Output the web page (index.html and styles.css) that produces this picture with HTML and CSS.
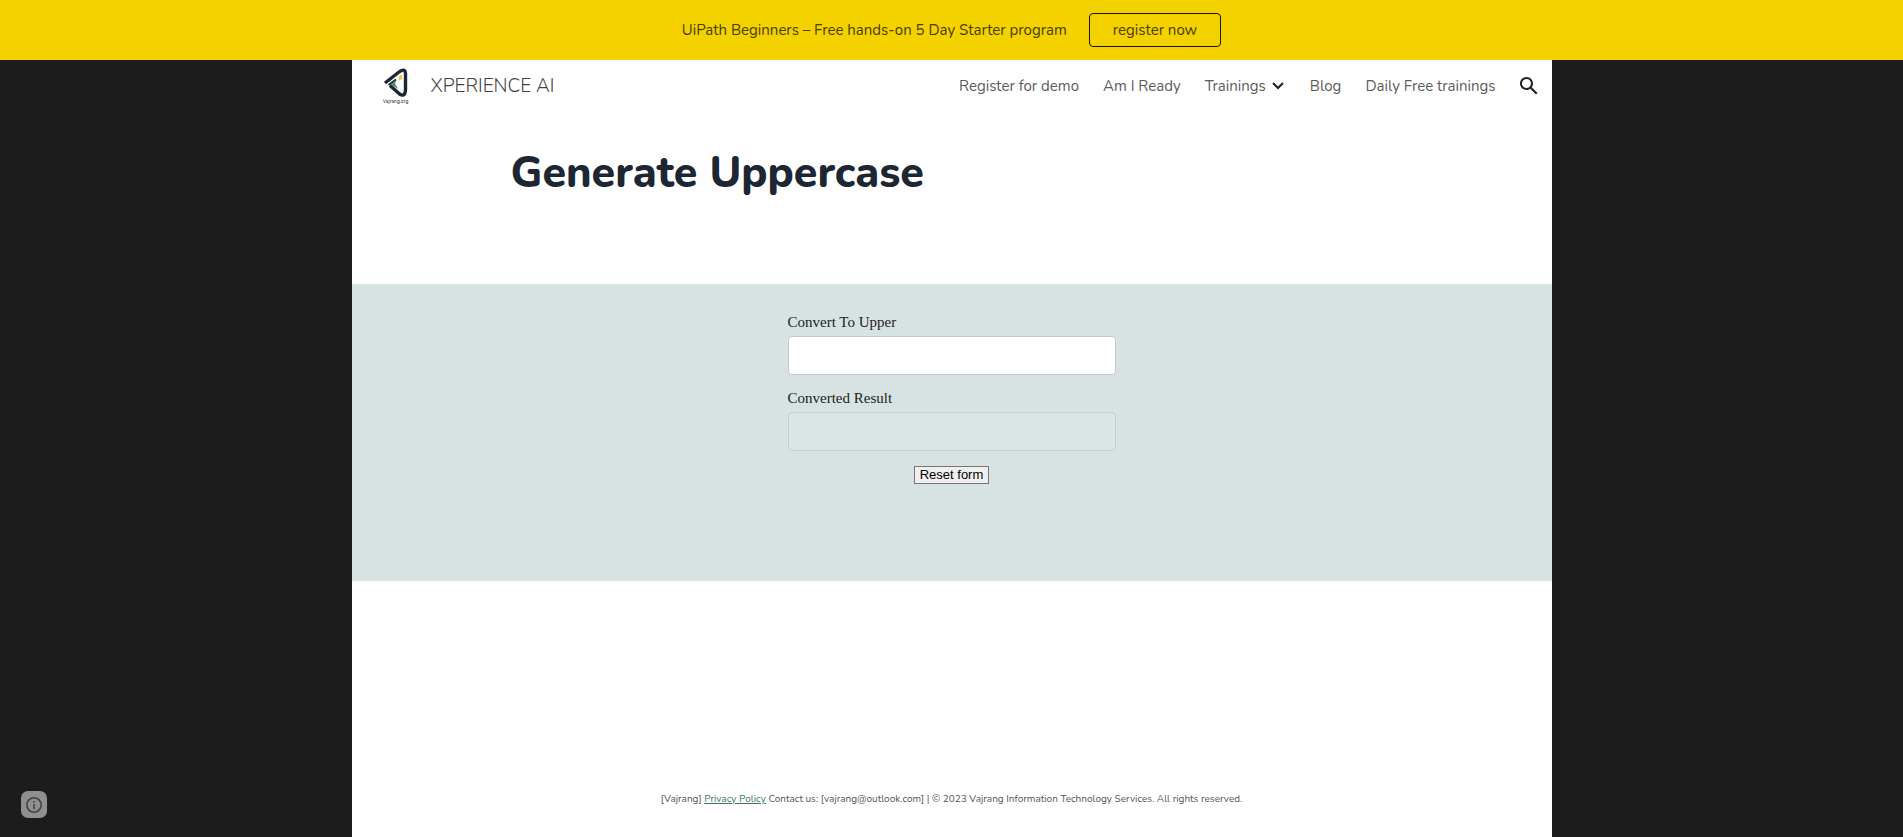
FILE: index.html
```html
<!DOCTYPE html>
<html lang="en">
<head>
<meta charset="utf-8">
<meta name="viewport" content="width=device-width, initial-scale=1">
<title>Generate Uppercase - XPERIENCE AI</title>
<link rel="stylesheet" href="styles.css">
</head>
<body>
<aside class="banner">
  <p class="banner-text">UiPath Beginners – Free hands-on 5 Day Starter program</p>
  <a class="banner-link" href="#register">register now</a>
</aside>
<div class="page">
  <header class="header">
    <a class="brand" href="#home">
      <span class="logo">
        <svg class="logo-mark" viewBox="0 0 26 30" aria-hidden="true">
          <path d="M2 15 16 4Q22-.5 22.500 5.500V22Q22 29.500 16.500 26L7 17.500" fill="none" stroke="#1c2733" stroke-width="3.400"/>
          <path d="m5.500 17 7.500-5.500" fill="none" stroke="#1c2733" stroke-width="2"/>
          <path d="m7.500 16.500 5.500-4-1 3.500 3.500 5z" fill="#4f8b78"/>
          <path d="m16 8.800 3-2.500v5l-3 1z" fill="#eac74a"/>
        </svg>
        <span class="logo-name">Vajrang.org</span>
      </span>
      <span class="brand-name">XPERIENCE AI</span>
    </a>
    <nav class="nav" aria-label="Site">
      <a class="nav-link" href="#demo">Register for demo</a>
      <a class="nav-link" href="#ready">Am I Ready</a>
      <a class="nav-link nav-more" href="#trainings">Trainings
        <svg class="chevron" viewBox="0 0 12 8" aria-hidden="true"><path d="m1 1 5 5 5-5" fill="none" stroke="#212121" stroke-width="2"/></svg>
      </a>
      <a class="nav-link" href="#blog">Blog</a>
      <a class="nav-link" href="#daily">Daily Free trainings</a>
      <button class="search" type="button" aria-label="Open search">
        <svg class="search-icon" viewBox="3 3 18 18" aria-hidden="true"><path fill="#212121" d="M20.490 19l-5.730-5.730C15.530 12.200 16 10.910 16 9.500 16 5.910 13.090 3 9.500 3S3 5.910 3 9.500 5.910 16 9.500 16c1.410 0 2.700-.47 3.770-1.240L19 20.490 20.490 19zM5 9.500C5 7.010 7.010 5 9.500 5S14 7.010 14 9.500 11.990 14 9.500 14 5 11.990 5 9.500z"/></svg>
      </button>
    </nav>
  </header>
  <main>
    <div class="title-section">
      <h1 class="title">Generate Uppercase</h1>
    </div>
    <section class="tool">
      <form class="form">
        <label class="label" for="source">Convert To Upper</label>
        <input class="field" id="source" type="text">
        <label class="label" for="result">Converted Result</label>
        <input class="field" id="result" type="text" disabled>
        <button class="reset" type="reset">Reset form</button>
      </form>
    </section>
  </main>
  <footer class="footer">
    <p class="footer-text">[Vajrang] <a class="footer-link" href="#privacy">Privacy Policy</a> Contact us: [vajrang@outlook.com] | © 2023 Vajrang Information Technology Services. All rights reserved.</p>
  </footer>
</div>
<button class="info" type="button" aria-label="Site actions">
  <svg class="info-icon" viewBox="0 0 18 18" aria-hidden="true"><circle cx="9" cy="9" r="7.200" fill="none" stroke="#424242" stroke-width="1.600"/><path d="M8.200 5h1.600v1.600H8.200zM8.200 8h1.600v5H8.200z" fill="#424242"/></svg>
</button>
</body>
</html>
```
FILE: styles.css
```css
* {
  box-sizing: border-box;
}

body {
  margin: 0;
  min-height: 100vh;
  display: flex;
  flex-direction: column;
  background: #1c1c1c;
  color: #212121;
  font-family: Nunito, "Open Sans", sans-serif;
}

.banner {
  display: flex;
  flex-wrap: wrap;
  align-items: center;
  justify-content: center;
  gap: 22px;
  min-height: 60px;
  background: #f4d200;
  color: #4a3d0a;
  font-size: 15px;
}

.banner-text {
  margin: 0;
}

.banner-link {
  padding: 0 23px;
  border: 1px solid #1c1500;
  border-radius: 4px;
  color: inherit;
  line-height: 32px;
  text-decoration: none;
}

.page {
  flex: 1;
  display: flex;
  flex-direction: column;
  width: 100%;
  max-width: 1200px;
  margin: 0 auto;
  background: #fff;
}

.header {
  display: flex;
  align-items: center;
  justify-content: space-between;
  min-height: 52px;
  padding: 0 14px 0 30px;
}

.brand {
  display: flex;
  align-items: center;
  gap: 21px;
  color: #424242;
  text-decoration: none;
}

.logo {
  display: flex;
  flex-direction: column;
  align-items: center;
  width: 28px;
}

.logo-mark {
  width: 26px;
  height: 30px;
}

.logo-name {
  font-size: 5px;
  line-height: 7px;
  color: #212121;
}

.brand-name {
  font-size: 19px;
  font-weight: 300;
}

.nav {
  display: flex;
  align-items: center;
  gap: 24px;
  font-size: 15px;
}

.nav-link {
  color: #5c5c5c;
  text-decoration: none;
}

.nav-more {
  display: flex;
  align-items: center;
  gap: 6px;
  padding-right: 2px;
}

.chevron {
  width: 12px;
  height: 8px;
}

.search {
  display: flex;
  padding: 0;
  border: 0;
  background: none;
}

.search-icon {
  width: 18px;
  height: 18px;
}

.title-section {
  min-height: 172px;
  padding: 33px 159px;
}

.title {
  margin: 0;
  color: #1c2733;
  font-size: 43px;
  font-weight: 800;
  line-height: 56px;
}

.tool {
  min-height: 297px;
  padding: 28px 16px;
  background: #d7e3e2;
}

.form {
  display: flex;
  flex-direction: column;
  width: 100%;
  max-width: 328px;
  margin: 0 auto;
}

.label {
  padding-bottom: 4px;
  font-family: "Liberation Serif", serif;
  font-size: 15px;
  line-height: 20px;
}

.field {
  width: 100%;
  height: 39px;
  margin: 0 0 13px;
  padding: 0 12px;
  border: 1px solid #c0cccb;
  border-radius: 4px;
  background: #fff;
}

.field:disabled {
  background: #dce5e5;
  border-color: #c4cfcf;
}

.reset {
  align-self: center;
  margin-top: 2px;
  padding: 0 5px;
  border: 1px solid #767676;
  background: #efefef;
  color: #000;
  font-family: "Liberation Sans", sans-serif;
  font-size: 13px;
  line-height: 16px;
}

.footer {
  margin-top: auto;
  padding: 0 16px 30px;
  text-align: center;
}

.footer-text {
  margin: 0;
  color: #555;
  font-size: 10px;
  line-height: 16px;
}

.footer-link {
  color: #3c7865;
}

.info {
  position: fixed;
  left: 21px;
  bottom: 19px;
  display: flex;
  align-items: center;
  justify-content: center;
  width: 26px;
  height: 27px;
  padding: 0;
  border: 0;
  border-radius: 7px;
  background: #8f8f8f;
}

.info-icon {
  width: 18px;
  height: 18px;
}
```
